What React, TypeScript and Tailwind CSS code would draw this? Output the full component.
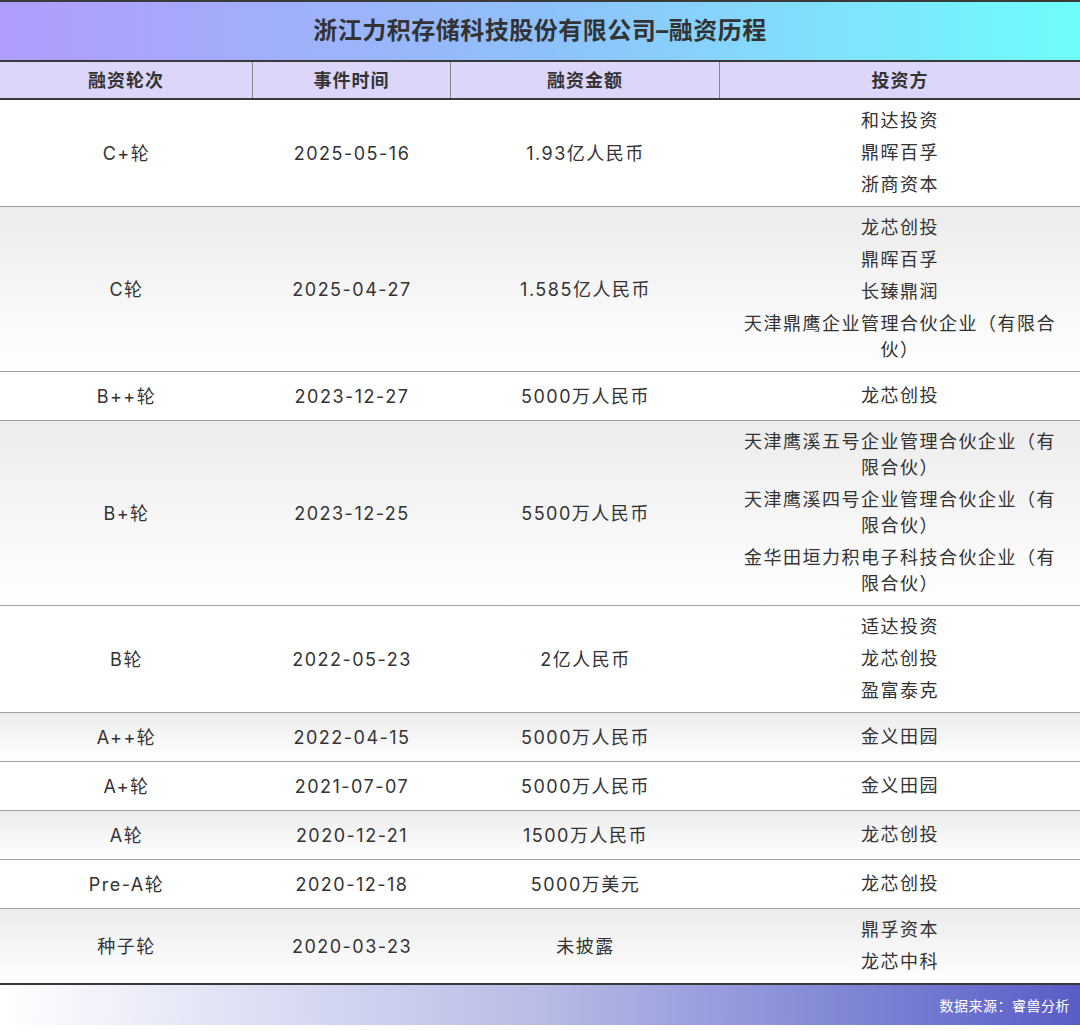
const rows: [string, string, string, string[]][] = [
  ["C+轮", "2025-05-16", "1.93亿人民币", ["和达投资", "鼎晖百孚", "浙商资本"]],
  ["C轮", "2025-04-27", "1.585亿人民币", ["龙芯创投", "鼎晖百孚", "长臻鼎润", "天津鼎鹰企业管理合伙企业（有限合伙）"]],
  ["B++轮", "2023-12-27", "5000万人民币", ["龙芯创投"]],
  ["B+轮", "2023-12-25", "5500万人民币", ["天津鹰溪五号企业管理合伙企业（有限合伙）", "天津鹰溪四号企业管理合伙企业（有限合伙）", "金华田垣力积电子科技合伙企业（有限合伙）"]],
  ["B轮", "2022-05-23", "2亿人民币", ["适达投资", "龙芯创投", "盈富泰克"]],
  ["A++轮", "2022-04-15", "5000万人民币", ["金义田园"]],
  ["A+轮", "2021-07-07", "5000万人民币", ["金义田园"]],
  ["A轮", "2020-12-21", "1500万人民币", ["龙芯创投"]],
  ["Pre-A轮", "2020-12-18", "5000万美元", ["龙芯创投"]],
  ["种子轮", "2020-03-23", "未披露", ["鼎孚资本", "龙芯中科"]],
];

export default function App() {
  return (
    <div className="w-[1080px] h-[1031px] bg-white text-[#333] overflow-hidden" style={{ fontFamily: 'Inter, "Noto Sans CJK SC", sans-serif' }}>
      <div className="h-[62px] border-t-2 border-b-2 border-[#3a3a3a] bg-gradient-to-r from-[#b09cfb] via-[#8ec0fb] to-[#6cfdfb] flex items-center justify-center text-[24px] font-bold tracking-[0.5px]">
        浙江力积存储科技股份有限公司–融资历程
      </div>
      <div className="flex h-[38px] bg-[#ddd6fb] border-b-2 border-[#3a3a3a] text-[18px] font-bold tracking-[1px]">
        <div className="w-[253px] flex items-center justify-center border-r border-[#888]">融资轮次</div>
        <div className="w-[198px] flex items-center justify-center border-r border-[#888]">事件时间</div>
        <div className="w-[269px] flex items-center justify-center border-r border-[#888]">融资金额</div>
        <div className="flex-1 flex items-center justify-center">投资方</div>
      </div>
      {rows.map((r, i) => (
        <div key={i} className={`flex text-[18px] tracking-[1.5px] border-b ${i === rows.length - 1 ? "border-[#3a3a3a] border-b-2" : "border-[#a0a0a0]"} ${i % 2 === 1 ? "bg-gradient-to-b from-[#ececec] to-white" : "bg-white"}`}>
          <div className="w-[253px] flex items-center justify-center">{r[0]}</div>
          <div className="w-[198px] flex items-center justify-center">{r[1]}</div>
          <div className="w-[269px] flex items-center justify-center">{r[2]}</div>
          <div className="flex-1 flex flex-col justify-center gap-[6px] py-[8px] px-[16px] min-h-[48px] text-center">
            {r[3].map((t, j) => (
              <div key={j} className="leading-[26px]">{t}</div>
            ))}
          </div>
        </div>
      ))}
      <div className="h-[40px] bg-gradient-to-r from-white via-[#b8bce6] to-[#5a5cc6] flex items-center justify-end pr-[10px] text-[14px] text-white tracking-[0.5px]">
        数据来源：睿兽分析
      </div>
    </div>
  );
}
